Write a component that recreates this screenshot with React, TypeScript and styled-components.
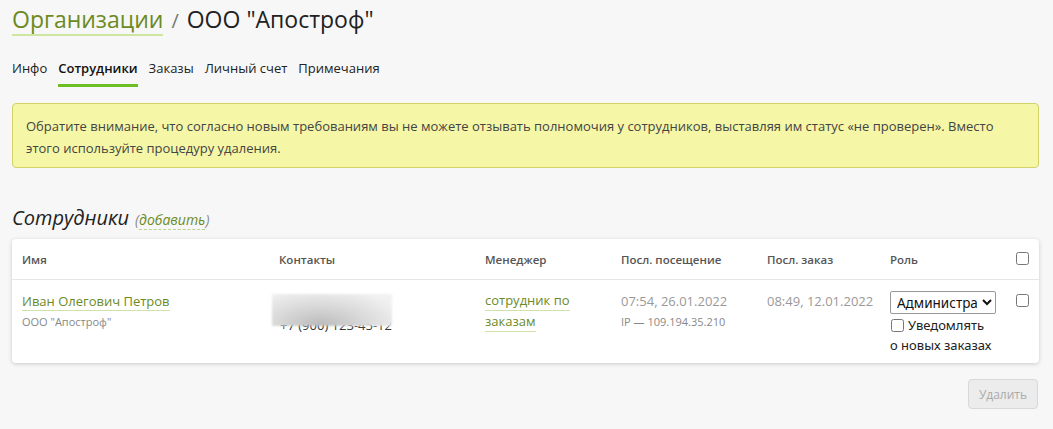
import React from 'react';
import styled, { createGlobalStyle } from 'styled-components';

const GlobalStyle = createGlobalStyle`
  html, body {
    margin: 0;
    padding: 0;
    background: #f7f7f7;
    font-family: "Open Sans", "Noto Sans", Arial, sans-serif;
    color: #222;
  }
  * { box-sizing: border-box; }
`;

const Page = styled.div`
  padding: 2px 14px 20px 12px;
`;

const Title = styled.h1`
  margin: 0;
  font-size: 23px;
  font-weight: 400;
  line-height: 34px;
  display: flex;
  align-items: baseline;
  gap: 8px;
`;

const TitleLink = styled.a`
  color: #6b8a1f;
  text-decoration: none;
  border-bottom: 2px solid #cfe6a3;
  line-height: 30px;
`;

const Slash = styled.span`
  color: #777;
  font-size: 20px;
`;

const Tabs = styled.nav`
  display: flex;
  gap: 11px;
  margin-top: 20px;
`;

const Tab = styled.a<{ $active?: boolean }>`
  font-size: 13px;
  color: ${p => (p.$active ? '#111' : '#222')};
  font-weight: ${p => (p.$active ? 600 : 400)};
  text-decoration: none;
  padding-bottom: 6px;
  border-bottom: 3px solid ${p => (p.$active ? '#6cbf24' : 'transparent')};
  line-height: 20px;
`;

const Notice = styled.div`
  margin-top: 16px;
  background: #f5f7a7;
  border: 1px solid #d2d268;
  border-radius: 4px;
  padding: 11px 13px 8px 13px;
  font-size: 13px;
  line-height: 22px;
  color: #444;
`;

const SectionHead = styled.div`
  margin-top: 36px;
  display: flex;
  align-items: baseline;
  gap: 6px;
`;

const SectionTitle = styled.h2`
  margin: 0;
  font-size: 20px;
  font-style: italic;
  font-weight: 400;
  color: #222;
`;

const AddLink = styled.span`
  font-size: 14px;
  font-style: italic;
  color: #888;
  a {
    color: #6b8a1f;
    text-decoration: none;
    border-bottom: 1px dashed #b9d48a;
  }
`;

const Card = styled.div`
  margin-top: 8px;
  background: #fff;
  border-radius: 4px;
  box-shadow: 0 1px 4px rgba(0, 0, 0, 0.18);
`;

const Grid = styled.div`
  display: grid;
  grid-template-columns: 257px 206px 136px 146px 123px 126px 1fr;
  padding-left: 10px;
`;

const HeadRow = styled(Grid)`
  height: 41px;
  align-items: center;
  border-bottom: 1px solid #e6e6e6;
`;

const HeadCell = styled.div`
  font-size: 11.5px;
  font-weight: 600;
  color: #555;
`;

const BodyRow = styled(Grid)`
  padding-top: 10px;
  padding-bottom: 8px;
  align-items: start;
`;

const Cell = styled.div`
  font-size: 13px;
  line-height: 22px;
`;

const GreenLink = styled.a`
  color: #6b8a1f;
  text-decoration: none;
  border-bottom: 1px solid #cfe3a8;
`;

const Sub = styled.div`
  font-size: 11px;
  color: #888;
  line-height: 20px;
`;

const Muted = styled.div`
  color: #999;
  font-size: 13px;
  line-height: 22px;
`;

const Phone = styled.div`
  position: relative;
  width: 128px;
  height: 36px;
  margin-left: -7px;
  margin-top: 4px;
  font-size: 13px;
  color: #333;
`;

const PhoneText = styled.span`
  position: absolute;
  left: 8px;
  top: 20px;
  white-space: nowrap;
`;

const Blur = styled.div`
  position: absolute;
  left: 0;
  top: 0;
  width: 120px;
  height: 32px;
  background: radial-gradient(ellipse at 40% 95%, #bcbcbc 0%, #dadada 45%, #f1f1f1 85%);
  filter: blur(1px);
`;

const ManagerCell = styled(Cell)`
  line-height: 21px;
  width: 100px;
`;

const ManagerLink = styled(GreenLink)`
  padding-bottom: 1px;
`;

const RoleCell = styled.div`
  display: flex;
  flex-direction: column;
`;

const Select = styled.select`
  width: 106px;
  height: 23px;
  font-family: "Noto Sans", "Open Sans", sans-serif;
  font-size: 13.5px;
  color: #111;
  border: 1px solid #999;
  border-radius: 2px;
  background: #fff;
  padding: 0 2px;
  margin-top: 1px;
`;

const Notify = styled.label`
  font-family: "Noto Sans", "Open Sans", sans-serif;
  font-size: 13px;
  color: #222;
  line-height: 20px;
  margin-top: 1px;
  input {
    margin: 0 4px 0 1px;
    width: 13px;
    height: 13px;
    vertical-align: -2px;
  }
`;

const Box = styled.input`
  margin: 0;
  width: 13px;
  height: 13px;
`;

const Footer = styled.div`
  display: flex;
  justify-content: flex-end;
  margin-top: 16px;
`;

const DeleteBtn = styled.button`
  width: 70px;
  height: 30px;
  background: #ececec;
  border: 1px solid #d8d8d8;
  border-radius: 4px;
  color: #aaa;
  font-family: "Open Sans", sans-serif;
  font-size: 12px;
  margin-right: 1px;
`;

export default function App() {
  return (
    <>
      <GlobalStyle />
      <Page>
        <Title>
          <TitleLink href="#">Организации</TitleLink>
          <Slash>/</Slash>
          <span>ООО "Апостроф"</span>
        </Title>
        <Tabs>
          <Tab href="#">Инфо</Tab>
          <Tab href="#" $active>Сотрудники</Tab>
          <Tab href="#">Заказы</Tab>
          <Tab href="#">Личный счет</Tab>
          <Tab href="#">Примечания</Tab>
        </Tabs>
        <Notice>
          Обратите внимание, что согласно новым требованиям вы не можете отзывать полномочия у сотрудников, выставляя им статус «не проверен». Вместо этого используйте процедуру удаления.
        </Notice>
        <SectionHead>
          <SectionTitle>Сотрудники</SectionTitle>
          <AddLink>(<a href="#">добавить</a>)</AddLink>
        </SectionHead>
        <Card>
          <HeadRow>
            <HeadCell>Имя</HeadCell>
            <HeadCell>Контакты</HeadCell>
            <HeadCell>Менеджер</HeadCell>
            <HeadCell>Посл. посещение</HeadCell>
            <HeadCell>Посл. заказ</HeadCell>
            <HeadCell>Роль</HeadCell>
            <div><Box type="checkbox" /></div>
          </HeadRow>
          <BodyRow>
            <Cell>
              <GreenLink href="#">Иван Олегович Петров</GreenLink>
              <Sub>ООО "Апостроф"</Sub>
            </Cell>
            <Cell>
              <Phone>
                <PhoneText>+7 (900) 123-45-12</PhoneText>
                <Blur />
              </Phone>
            </Cell>
            <ManagerCell>
              <ManagerLink href="#">сотрудник по</ManagerLink>{' '}
              <ManagerLink href="#">заказам</ManagerLink>
            </ManagerCell>
            <Cell>
              <Muted>07:54, 26.01.2022</Muted>
              <Sub>IP — 109.194.35.210</Sub>
            </Cell>
            <Cell>
              <Muted>08:49, 12.01.2022</Muted>
            </Cell>
            <RoleCell>
              <Select defaultValue="admin">
                <option value="admin">Администратор</option>
                <option value="user">Сотрудник</option>
              </Select>
              <Notify>
                <input type="checkbox" />Уведомлять
                <br />о новых заказах
              </Notify>
            </RoleCell>
            <div><Box type="checkbox" /></div>
          </BodyRow>
        </Card>
        <Footer>
          <DeleteBtn disabled>Удалить</DeleteBtn>
        </Footer>
      </Page>
    </>
  );
}
